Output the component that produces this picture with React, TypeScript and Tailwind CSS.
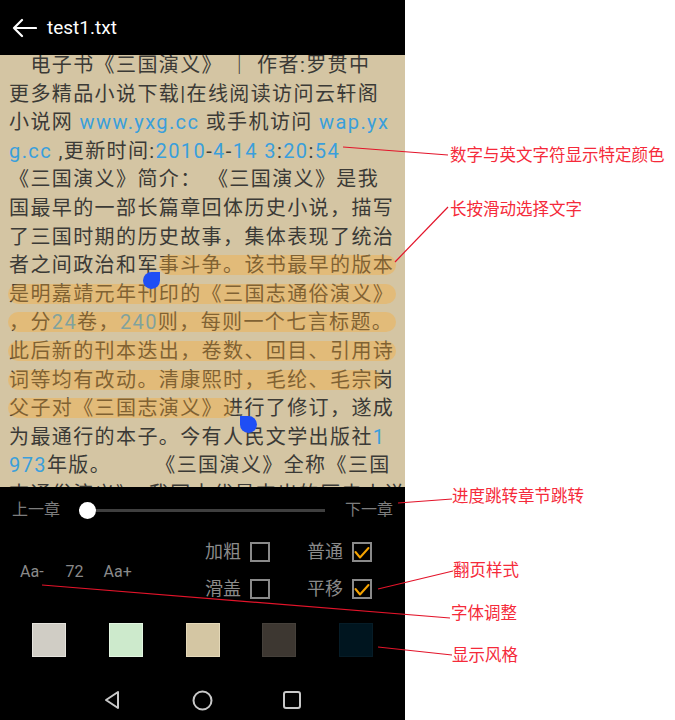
import React from "react";

type Seg = { t: string; b?: boolean };
type Line = { segs: Seg[]; hl?: string };

const lines: Line[] = [
  { segs: [{ t: "　电子书《三国演义》 ｜ 作者:罗贯中" }] },
  { segs: [{ t: "更多精品小说下载|在线阅读访问云轩阁" }] },
  {
    segs: [
      { t: "小说网 " },
      { t: "www.yxg.cc", b: true },
      { t: " 或手机访问 " },
      { t: "wap.yx", b: true },
    ],
  },
  {
    segs: [
      { t: "g.cc", b: true },
      { t: " ,更新时间:" },
      { t: "2010", b: true },
      { t: "-" },
      { t: "4", b: true },
      { t: "-" },
      { t: "14 3", b: true },
      { t: ":" },
      { t: "20", b: true },
      { t: ":" },
      { t: "54", b: true },
    ],
  },
  { segs: [{ t: "《三国演义》简介： 《三国演义》是我" }] },
  { segs: [{ t: "国最早的一部长篇章回体历史小说，描写" }] },
  { segs: [{ t: "了三国时期的历史故事，集体表现了统治" }] },
  { segs: [{ t: "者之间政治和军事斗争。该书最早的版本" }], hl: "left-[159px] w-[237px]" },
  { segs: [{ t: "是明嘉靖元年刊印的《三国志通俗演义》" }], hl: "left-[8px] w-[388px]" },
  {
    segs: [
      { t: "，分" },
      { t: "24", b: true },
      { t: "卷，" },
      { t: "240", b: true },
      { t: "则，每则一个七言标题。" },
    ],
    hl: "left-[8px] w-[388px]",
  },
  { segs: [{ t: "此后新的刊本迭出，卷数、回目、引用诗" }], hl: "left-[8px] w-[388px]" },
  { segs: [{ t: "词等均有改动。清康熙时，毛纶、毛宗岗" }], hl: "left-[8px] w-[374px]" },
  { segs: [{ t: "父子对《三国志演义》进行了修订，遂成" }], hl: "left-[8px] w-[226px]" },
  { segs: [{ t: "为最通行的本子。今有人民文学出版社" }, { t: "1", b: true }] },
  { segs: [{ t: "973", b: true }, { t: "年版。　　　《三国演义》全称《三国" }] },
  { segs: [{ t: "志通俗演义》，我国古代最杰出的历史小说" }] },
];

function CheckBox({ checked }: { checked?: boolean }) {
  return (
    <div className="w-[20px] h-[20px] border-2 border-[#8a8a8a] flex items-center justify-center">
      {checked && (
        <svg width="20" height="20" viewBox="0 0 20 20" className="shrink-0">
          <polyline
            points="3.5,10 8,15.5 16.5,6"
            fill="none"
            stroke="#f5a300"
            strokeWidth="2"
            strokeLinecap="round"
            strokeLinejoin="round"
          />
        </svg>
      )}
    </div>
  );
}

function CheckItem({ label, checked }: { label: string; checked?: boolean }) {
  return (
    <div className="flex items-center h-[37px]">
      <span className="text-[18px] leading-[20px] text-[#8a8a8a]">{label}</span>
      <div className="ml-[9px]">
        <CheckBox checked={checked} />
      </div>
    </div>
  );
}

const annotations = [
  { text: "数字与英文字符显示特定颜色", cls: "top-[144px] left-[45px]" },
  { text: "长按滑动选择文字", cls: "top-[198px] left-[45px]" },
  { text: "进度跳转章节跳转", cls: "top-[485px] left-[47px]" },
  { text: "翻页样式", cls: "top-[559px] left-[48px]" },
  { text: "字体调整", cls: "top-[602px] left-[46px]" },
  { text: "显示风格", cls: "top-[644px] left-[47px]" },
];

export default function App() {
  return (
    <div className="relative w-[675px] h-[720px] flex bg-white overflow-hidden font-[Roboto,'Noto_Sans_CJK_SC',sans-serif]">
      {/* Phone */}
      <div className="w-[405px] h-[720px] flex flex-col bg-black">
        {/* Header */}
        <div className="relative z-10 h-[55px] shrink-0 flex items-center bg-black pl-[12px]">
          <svg width="25" height="20" viewBox="0 0 25 20">
            <path
              d="M24 10 H2 M10 2 L2 10 L10 18"
              fill="none"
              stroke="#ffffff"
              strokeWidth="2.2"
              strokeLinecap="round"
              strokeLinejoin="round"
            />
          </svg>
          <span className="ml-[10px] text-[19px] leading-[24px] text-white">test1.txt</span>
        </div>

        {/* Reading area */}
        <div className="relative h-[432px] shrink-0 overflow-hidden bg-[#d4c5a3]">
          <div className="-mt-[4px]">
            {lines.map((ln, i) => (
              <div
                key={i}
                className="relative h-[28.6px] pl-[9px] whitespace-pre text-[20px] leading-[28.6px] tracking-[1.4px] text-[#3b3a36]"
              >
                {ln.segs.map((s, j) => (
                  <span key={j} className={s.b ? "text-[#3a9fdc]" : undefined}>
                    {s.t}
                  </span>
                ))}
                {ln.hl && (
                  <div
                    className={
                      "absolute top-[4px] h-[20px] rounded-full bg-[rgba(252,168,48,0.36)] " + ln.hl
                    }
                  />
                )}
              </div>
            ))}
          </div>
          {/* selection handles */}
          <div className="absolute left-[143px] top-[217px] w-[17px] h-[17px] bg-[#1f4ef5] rounded-tl-full rounded-bl-full rounded-br-full" />
          <div className="absolute left-[240px] top-[361px] w-[17px] h-[17px] bg-[#1f4ef5] rounded-tr-full rounded-bl-full rounded-br-full" />
        </div>

        {/* Bottom panel */}
        <div className="flex-1 flex flex-col bg-black">
          {/* slider row */}
          <div className="h-[46px] flex items-center pl-[12px] pr-[12px]">
            <span className="text-[16px] leading-[20px] text-[#7d7d7d]">上一章</span>
            <div className="relative flex-1 ml-[19px] mr-[20px] h-[17px] flex items-center">
              <div className="w-full h-[3px] bg-[#3f3f3f]" />
              <div className="absolute left-0 top-0 w-[17px] h-[17px] rounded-full bg-white" />
            </div>
            <span className="text-[16px] leading-[20px] text-[#7d7d7d]">下一章</span>
          </div>

          {/* controls */}
          <div className="h-[74px] flex">
            <div className="w-[205px] pl-[20px] pt-[4px] flex items-center text-[16px] leading-[20px] text-[#8a8a8a]">
              <span>Aa-</span>
              <span className="ml-[22px]">72</span>
              <span className="ml-[20px]">Aa+</span>
            </div>
            <div className="flex flex-col">
              <div className="flex">
                <div className="w-[102px]">
                  <CheckItem label="加粗" />
                </div>
                <CheckItem label="普通" checked />
              </div>
              <div className="flex">
                <div className="w-[102px]">
                  <CheckItem label="滑盖" />
                </div>
                <CheckItem label="平移" checked />
              </div>
            </div>
          </div>

          {/* swatches */}
          <div className="mt-[16px] h-[34px] px-[32px] flex justify-between">
            <div className="w-[34px] h-[34px] bg-[#d0cdc5] border border-[#e4e2dc]" />
            <div className="w-[34px] h-[34px] bg-[#cdeacc] border border-[#e2f5e1]" />
            <div className="w-[34px] h-[34px] bg-[#d4c6a3] border border-[#e4d8b8]" />
            <div className="w-[34px] h-[34px] bg-[#3d3731] border border-[#45403a]" />
            <div className="w-[34px] h-[34px] bg-[#00151f] border border-[#061c27]" />
          </div>

          {/* nav bar */}
          <div className="flex-1 pt-[23px] pl-[67px] flex items-center">
            <div className="w-[90px] flex justify-center">
              <svg width="18" height="20" viewBox="0 0 18 20">
                <polygon
                  points="15,2 3,10 15,18"
                  fill="none"
                  stroke="#c8c8c8"
                  strokeWidth="2"
                  strokeLinejoin="round"
                />
              </svg>
            </div>
            <div className="w-[90px] flex justify-center">
              <svg width="21" height="21" viewBox="0 0 21 21">
                <circle cx="10.5" cy="10.5" r="9" fill="none" stroke="#c8c8c8" strokeWidth="2" />
              </svg>
            </div>
            <div className="w-[90px] flex justify-center">
              <svg width="18" height="18" viewBox="0 0 18 18">
                <rect x="1" y="1" width="16" height="16" rx="2" fill="none" stroke="#c8c8c8" strokeWidth="2" />
              </svg>
            </div>
          </div>
        </div>
      </div>

      {/* Annotation column */}
      <div className="relative flex-1 h-[720px]">
        {annotations.map((a, i) => (
          <div
            key={i}
            className={
              "absolute whitespace-nowrap text-[16.5px] leading-[21px] text-[#f52a3a] font-['Noto_Sans_CJK_SC',sans-serif] " +
              a.cls
            }
          >
            {a.text}
          </div>
        ))}
      </div>

      {/* Annotation leader lines */}
      <svg
        className="absolute inset-0 pointer-events-none"
        width="675"
        height="720"
        viewBox="0 0 675 720"
      >
        <g stroke="#e3142a" strokeWidth="1.2" fill="none">
          <line x1="343" y1="147" x2="448" y2="155" />
          <line x1="395" y1="262" x2="448" y2="207" />
          <line x1="398" y1="503" x2="452" y2="499" />
          <line x1="378" y1="589" x2="453" y2="571" />
          <line x1="42" y1="585" x2="450" y2="618" />
          <line x1="378" y1="647" x2="452" y2="655" />
        </g>
      </svg>
    </div>
  );
}
